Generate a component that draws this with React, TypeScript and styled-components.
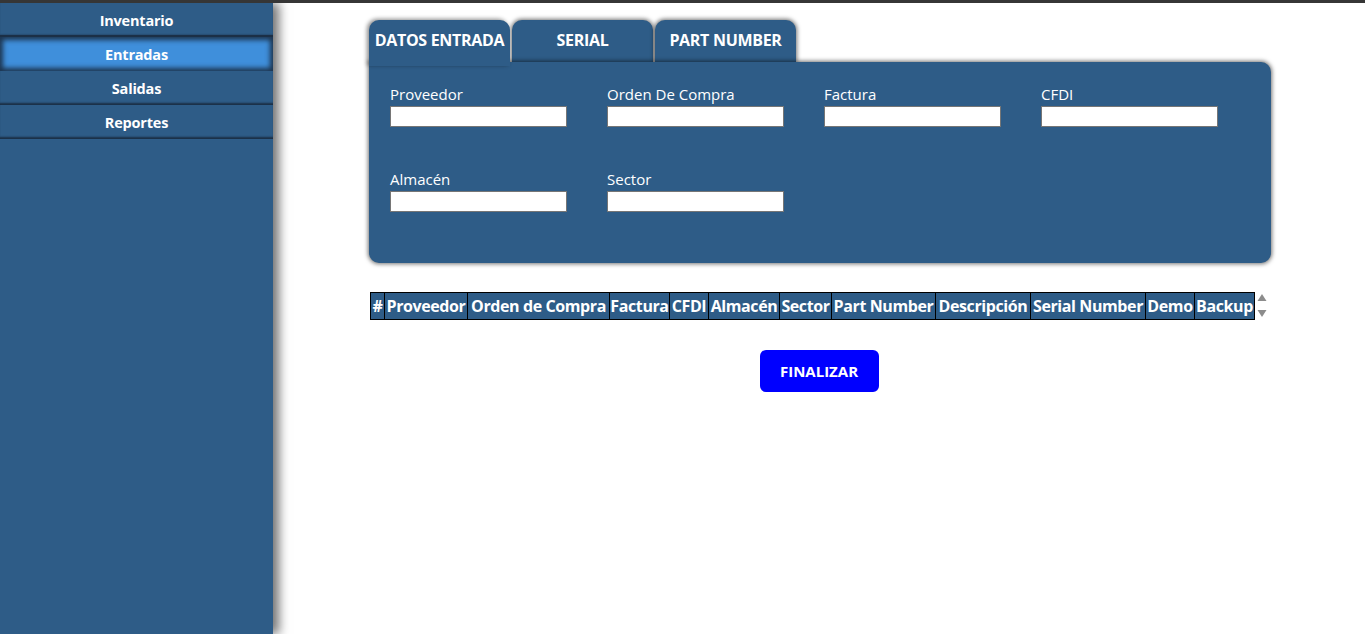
import styled, { createGlobalStyle } from "styled-components";

const GlobalStyle = createGlobalStyle`
  html, body {
    margin: 0;
    padding: 0;
    height: 100%;
    background: #ffffff;
    font-family: "Open Sans", "Noto Sans", sans-serif;
  }
  #root {
    height: 100%;
  }
`;

const Page = styled.div`
  display: flex;
  height: 100vh;
  box-sizing: border-box;
  border-top: 3px solid #363636;
  overflow: hidden;
`;

const Sidebar = styled.nav`
  width: 273px;
  flex-shrink: 0;
  background-color: #2e5c87;
  box-shadow: 6px 0 10px rgba(0, 0, 0, 0.55);
  position: relative;
  z-index: 2;
  display: flex;
  flex-direction: column;
`;

const MenuItem = styled.div<{ active?: boolean }>`
  height: 34px;
  display: flex;
  align-items: center;
  justify-content: center;
  color: #ffffff;
  font-weight: 700;
  font-size: 14.5px;
  letter-spacing: -0.2px;
  box-sizing: border-box;
  background-color: ${(p) => (p.active ? "#3f8fdb" : "#2e5c87")};
  box-shadow: ${(p) =>
    p.active
      ? "inset 0 0 5px 3px #1d3550, 0 -2px 0 #1b2f46"
      : "inset 0 -3px 2px -1px #1b2f46"};
`;

const Main = styled.main`
  flex: 1;
  display: flex;
  flex-direction: column;
  align-items: center;
  padding-top: 17px;
`;

const TabArea = styled.div`
  width: 902px;
  margin-left: 2px;
  display: flex;
  flex-direction: column;
`;

const TabRow = styled.div`
  display: flex;
  gap: 2px;
`;

const Tab = styled.div<{ active?: boolean }>`
  width: 141px;
  box-sizing: border-box;
  padding-top: 9px;
  text-align: center;
  background-color: #2e5c87;
  color: #ffffff;
  font-weight: 700;
  font-size: 16px;
  letter-spacing: -0.3px;
  white-space: nowrap;
  border-radius: 10px 10px 0 0;
  position: relative;
  z-index: ${(p) => (p.active ? 3 : 0)};
  margin-bottom: ${(p) => (p.active ? "-4px" : "0")};
  height: ${(p) => (p.active ? "46px" : "42px")};
  box-shadow: ${(p) =>
    p.active
      ? "-2px -1px 4px rgba(0,0,0,0.45)"
      : "0 0 4px 1px rgba(0, 0, 0, 0.55)"};
`;

const Panel = styled.div`
  background-color: #2e5c87;
  border-radius: 0 10px 10px 10px;
  box-shadow: 0 0 4px 1px rgba(0, 0, 0, 0.55);
  position: relative;
  z-index: 1;
  height: 201px;
  box-sizing: border-box;
  padding: 22px 21px 0;
  display: grid;
  grid-template-columns: repeat(4, 217px);
  grid-auto-rows: 65px;
  row-gap: 20px;
  align-content: start;
`;

const Field = styled.label`
  display: flex;
  flex-direction: column;
  color: #ffffff;
  font-size: 15px;
  line-height: 20px;
`;

const Input = styled.input`
  width: 177px;
  height: 21px;
  box-sizing: border-box;
  border: 1px solid #767676;
  background: #ffffff;
  margin: 2px 0 0;
  padding: 0 2px;
`;

const TableWrap = styled.div`
  margin-top: 29px;
  display: flex;
  align-items: flex-start;
  width: 900px;
  margin-left: 2px;
`;

const Table = styled.table`
  border-collapse: collapse;
  border: 1px solid #000;
`;

const Th = styled.th<{ w: number }>`
  width: ${(p) => p.w}px;
  min-width: ${(p) => p.w}px;
  box-sizing: border-box;
  padding: 0;
  height: 27px;
  background-color: #2e5c87;
  color: #ffffff;
  font-weight: 700;
  font-size: 16px;
  letter-spacing: -0.4px;
  white-space: nowrap;
  text-align: center;
  border: 1px solid #000;
`;

const ScrollArrows = styled.svg`
  width: 14px;
  height: 27px;
  margin-left: 0;
`;

const Finish = styled.button`
  margin-top: 30px;
  width: 119px;
  height: 42px;
  border: none;
  border-radius: 6px;
  background-color: #0000ff;
  color: #ffffff;
  font-family: inherit;
  font-weight: 700;
  font-size: 15px;
  cursor: pointer;
`;

const menu = ["Inventario", "Entradas", "Salidas", "Reportes"];

const fields = [
  "Proveedor",
  "Orden De Compra",
  "Factura",
  "CFDI",
  "Almacén",
  "Sector",
];

const columns: [string, number][] = [
  ["#", 14],
  ["Proveedor", 83],
  ["Orden de Compra", 142],
  ["Factura", 60],
  ["CFDI", 39],
  ["Almacén", 71],
  ["Sector", 52],
  ["Part Number", 104],
  ["Descripción", 95],
  ["Serial Number", 115],
  ["Demo", 49],
  ["Backup", 60],
];

export default function App() {
  return (
    <>
      <GlobalStyle />
      <Page>
        <Sidebar>
          {menu.map((m) => (
            <MenuItem key={m} active={m === "Entradas"}>
              {m}
            </MenuItem>
          ))}
        </Sidebar>
        <Main>
          <TabArea>
            <TabRow>
              <Tab active>DATOS ENTRADA</Tab>
              <Tab>SERIAL</Tab>
              <Tab>PART NUMBER</Tab>
            </TabRow>
            <Panel>
              {fields.map((f) => (
                <Field key={f}>
                  {f}
                  <Input type="text" />
                </Field>
              ))}
            </Panel>
          </TabArea>
          <TableWrap>
            <Table>
              <thead>
                <tr>
                  {columns.map(([name, w]) => (
                    <Th key={name} w={w}>
                      {name}
                    </Th>
                  ))}
                </tr>
              </thead>
            </Table>
            <ScrollArrows viewBox="0 0 14 27">
              <path d="M2.5 9 L7 2 L11.5 9 Z" fill="#8c8c8c" />
              <path d="M2.5 18 L7 25 L11.5 18 Z" fill="#8c8c8c" />
            </ScrollArrows>
          </TableWrap>
          <Finish>FINALIZAR</Finish>
        </Main>
      </Page>
    </>
  );
}
